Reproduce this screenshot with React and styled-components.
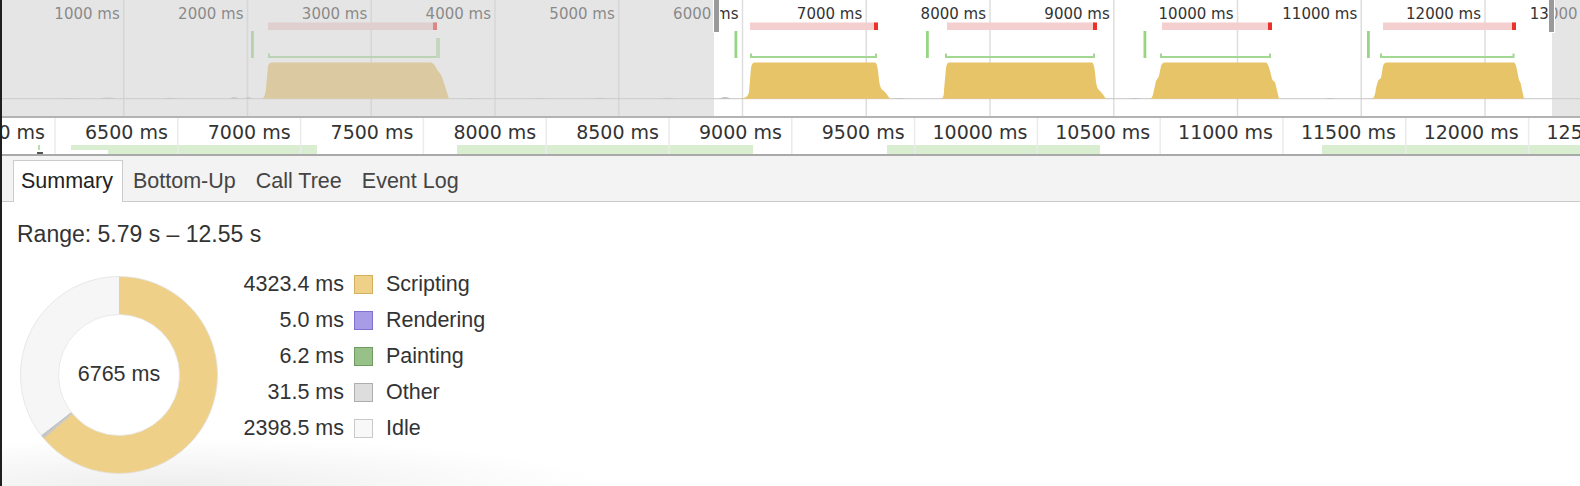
import React from "react";
import styled, { createGlobalStyle } from "styled-components";

const GlobalStyle = createGlobalStyle`
  html, body {
    margin: 0;
    padding: 0;
    background: #ffffff;
  }
  body {
    font-family: "Liberation Sans", Arial, sans-serif;
    color: #333333;
    overflow: hidden;
  }
`;

const CANVAS_FONT = '"DejaVu Sans", Verdana, sans-serif';

// overview: 1000 ms every 123.75px, ruler: 500 ms every 122.8px starting at 6000 ms
const OV_STEP = 123.75;
const RULER_X0 = 55;
const RULER_STEP = 122.8;
const BASE = 98.7;

const frames = [
  {
    bar: [268, 437],
    bracket: [268, 440],
    tall: true,
    mark: 251,
    cpu: "M262,98.7 C264,98 265,96 266,88 L268,66 C269,63 270,62.5 272,62.5 L431,62.5 C434,63 436,68 438,71 C440,73 441,74 443,80 L449,98.7 Z",
  },
  {
    bar: [750, 878],
    bracket: [750, 877],
    mark: 734.5,
    cpu: "M741,98.7 C745,98 748,97 749,92 L751,68 C752,63 753,62.5 755,62.5 L875,62.5 C877,63 878,68 879,80 C880,88 882,90 884,91 C886,93 888,96 890,98.7 Z",
  },
  {
    bar: [947, 1097],
    bracket: [945, 1095],
    mark: 926,
    cpu: "M941,98.7 C943,98 944,96 944,90 L946,68 C947,63 948,62.5 949,62.5 L1092,62.5 C1094,63 1095,70 1096,82 C1097,89 1099,90 1100,91 C1102,93 1104,96 1106,98.7 Z",
  },
  {
    bar: [1162, 1272],
    bracket: [1160, 1271],
    mark: 1143.5,
    cpu: "M1150,98.7 C1152,98 1153,96 1154,90 L1156,81 C1157,79 1158,78 1159,76 L1161,66 C1162,63 1163,62.5 1165,62.5 L1266,62.5 C1268,63 1270,70 1272,79 C1273,81 1274,81 1275,82 L1279,98.7 Z",
  },
  {
    bar: [1383, 1516],
    bracket: [1380, 1514.5],
    mark: 1367,
    cpu: "M1372,98.7 C1374,98 1375,96 1376,88 L1378,81 C1379,79 1380,79 1381,78 L1383,66 C1384,63 1385,62.5 1387,62.5 L1514,62.5 C1516,63 1517,70 1519,80 C1520,82 1521,83 1521,85 L1524,98.7 Z",
  },
];

const bumps = [
  [70, 14, 0.8], [108, 18, 1.2], [170, 14, 1], [234, 10, 1.6], [248, 8, 1.6],
  [470, 10, 0.8], [540, 14, 0.8], [600, 18, 1], [668, 16, 1], [725, 12, 1.8],
  [900, 14, 0.8], [1135, 12, 0.8], [1330, 10, 0.8], [1500, 10, 0.8],
];

const ruleGreens = [
  [71, 317],
  [457, 753],
  [887, 1100],
  [1322, 1580],
];

const categories = [
  { value: 4323.4, label: "Scripting", fill: "#efd089", border: "#d2b05f", slice: "#efd089" },
  { value: 5.0, label: "Rendering", fill: "#a99ce6", border: "#8070cf", slice: "#a99ce6" },
  { value: 6.2, label: "Painting", fill: "#98c189", border: "#6e9b5f", slice: "#8fbf80" },
  { value: 31.5, label: "Other", fill: "#dddddd", border: "#aeaeae", slice: "#c4c4c4" },
  { value: 2398.5, label: "Idle", fill: "#f8f8f8", border: "#c9c9c9", slice: "#f6f6f6" },
];

const Frame = styled.div`
  display: flex;
  width: 1580px;
  height: 486px;
  box-sizing: border-box;
  border-left: 2px solid #1f1f1f;
  overflow: hidden;
`;

const Main = styled.div`
  flex: 1;
  min-width: 0;
  display: flex;
  flex-direction: column;
`;

const Overview = styled.div`
  position: relative;
  height: 116px;
  flex-shrink: 0;
  background: #ffffff;
  border-bottom: 2px solid #b3b3b3;
  overflow: hidden;

  svg {
    display: block;
  }
`;

const Dim = styled.div`
  position: absolute;
  top: 0;
  bottom: 0;
  left: ${(p) => p.$from}px;
  width: ${(p) => p.$to - p.$from}px;
  background: rgba(208, 208, 208, 0.55);
`;

const Handle = styled.div`
  position: absolute;
  top: 0;
  left: ${(p) => p.$at}px;
  width: 5px;
  height: 32px;
  background: #9a9a9a;
  border: 1px solid #ffffff;
  border-top: none;
`;

const Ruler = styled.div`
  height: 36px;
  flex-shrink: 0;
  background: #ffffff;
  border-bottom: 2px solid #a9a9a9;
  overflow: hidden;

  svg {
    display: block;
  }
`;

const TabBar = styled.div`
  display: flex;
  align-items: flex-end;
  height: 45px;
  flex-shrink: 0;
  padding-left: 11px;
  background: #f3f3f3;
  border-bottom: 1px solid #cbcbcb;
`;

const Tab = styled.div`
  display: flex;
  align-items: center;
  height: 41px;
  margin-bottom: -1px;
  padding: 0 9px 0 ${(p) => (p.$active ? 7 : 9)}px;
  font-size: 21.5px;
  color: ${(p) => (p.$active ? "#222222" : "#454545")};
  background: ${(p) => (p.$active ? "#ffffff" : "transparent")};
  border: 1px solid ${(p) => (p.$active ? "#cbcbcb" : "transparent")};
  border-bottom: none;
  white-space: nowrap;
`;

const SummaryPane = styled.div`
  flex: 1;
  padding: 19px 0 0 15px;
  background:
    radial-gradient(ellipse 430px 48px at 170px 100%, #eeeeee 0%, rgba(255, 255, 255, 0) 100%),
    #ffffff;
`;

const RangeLine = styled.div`
  font-size: 23px;
  line-height: 26px;
  color: #333333;
`;

const PieRow = styled.div`
  display: flex;
  align-items: flex-start;
  margin-top: 19px;
`;

const DonutBox = styled.div`
  display: grid;
  place-items: center;
  width: 200px;
  height: 200px;
  margin: 8.5px 0 0 2px;

  > * {
    grid-area: 1 / 1;
  }
`;

const DonutTotal = styled.div`
  font-size: 21.5px;
  color: #333333;
`;

const Legend = styled.div`
  display: grid;
  grid-template-columns: 120px 29px auto;
  grid-auto-rows: 36px;
  align-items: center;
  margin-left: 5px;
  font-size: 21.5px;
  line-height: 36px;
  color: #333333;
`;

const Value = styled.div`
  text-align: right;
  white-space: nowrap;
`;

const Swatch = styled.div`
  width: 17px;
  height: 17px;
  margin-left: 10px;
  background: ${(p) => p.$fill};
  border: 1px solid ${(p) => p.$border};
`;

const Label = styled.div`
  margin-left: 13px;
  white-space: nowrap;
`;

const OverviewChart = () => (
  <svg width="1578" height="116" viewBox="2 0 1578 116">
    {Array.from({ length: 13 }, (_, i) => i + 1).map((k) => (
      <g key={k}>
        <line x1={k * OV_STEP} x2={k * OV_STEP} y1="0" y2="116" stroke="#dedede" strokeWidth="1.5" />
        <text
          x={k * OV_STEP - 4}
          y="18.5"
          textAnchor="end"
          fontFamily={CANVAS_FONT}
          fontSize="15"
          fill="#333333"
        >
          {k * 1000} ms
        </text>
      </g>
    ))}
    <line x1="0" x2="1580" y1={BASE} y2={BASE} stroke="#c6c6c6" strokeWidth="1" />
    {bumps.map(([x, w, h], i) => (
      <path
        key={i}
        d={`M${x - w / 2},${BASE} Q${x},${BASE - h * 2} ${x + w / 2},${BASE} Z`}
        fill="#bdbdbd"
      />
    ))}
    {frames.map((f, i) => (
      <g key={i}>
        <rect x={f.bar[0]} y="22.5" width={f.bar[1] - f.bar[0]} height="7.5" fill="#f4cfcf" />
        <rect x={f.bar[1] - 4} y="22.5" width="4" height="7.5" fill="#e8322a" />
        <rect x={f.mark} y="31" width="2.8" height="27" fill="#97d584" />
        <path
          d={`M${f.bracket[0] + 1},53.5 L${f.bracket[0] + 1},57 L${f.bracket[1] - 1},57 L${f.bracket[1] - 1},53.5`}
          fill="none"
          stroke="#a3d894"
          strokeWidth="2"
        />
        {f.tall && (
          <rect x={f.bracket[1] - 4} y="38" width="4" height="20" fill="#b6e0a8" />
        )}
        <path d={f.cpu} fill="#e8c468" />
      </g>
    ))}
  </svg>
);

const RulerChart = () => (
  <svg width="1578" height="36" viewBox="2 118 1578 36">
    {ruleGreens.map(([a, b], i) => (
      <rect key={i} x={a} y="145" width={b - a} height="9" fill="#d9edd1" />
    ))}
    <rect x="71" y="150" width="37" height="4" fill="#ffffff" />
    <rect x="38" y="145" width="2" height="5" fill="#b9dfae" />
    <rect x="37" y="152" width="6" height="2" fill="#555555" />
    {Array.from({ length: 14 }, (_, k) => k).map((k) => {
      const x = RULER_X0 + k * RULER_STEP;
      return (
        <g key={k}>
          <line x1={x} x2={x} y1="118" y2="154" stroke="#ebebeb" strokeWidth="1.5" />
          <text
            x={x - 10}
            y="139"
            textAnchor="end"
            fontFamily={CANVAS_FONT}
            fontSize="19"
            fill="#333333"
          >
            {6000 + k * 500} ms
          </text>
        </g>
      );
    })}
  </svg>
);

const R_OUT = 98.5;
const R_IN = 60.5;

const polar = (r, deg) => {
  const rad = ((deg - 90) * Math.PI) / 180;
  return [100 + r * Math.cos(rad), 100 + r * Math.sin(rad)];
};

const sector = (a0, a1) => {
  const large = a1 - a0 > 180 ? 1 : 0;
  const [x0, y0] = polar(R_OUT, a0);
  const [x1, y1] = polar(R_OUT, a1);
  const [x2, y2] = polar(R_IN, a1);
  const [x3, y3] = polar(R_IN, a0);
  return `M${x0},${y0} A${R_OUT},${R_OUT} 0 ${large} 1 ${x1},${y1} L${x2},${y2} A${R_IN},${R_IN} 0 ${large} 0 ${x3},${y3} Z`;
};

const Donut = ({ items }) => {
  const total = items.reduce((s, c) => s + c.value, 0);
  let angle = 0;
  return (
    <DonutBox>
      <svg width="200" height="200" viewBox="0 0 200 200">
        {items.map((c) => {
          const start = angle;
          angle += (c.value / total) * 360;
          return <path key={c.label} d={sector(start, Math.min(angle, 359.99))} fill={c.slice} />;
        })}
        <circle cx="100" cy="100" r={R_OUT} fill="none" stroke="#e2e2e2" strokeWidth="0.8" />
        <circle cx="100" cy="100" r={R_IN} fill="none" stroke="#e4e4e4" strokeWidth="0.8" />
      </svg>
      <DonutTotal>{Math.round(total)} ms</DonutTotal>
    </DonutBox>
  );
};

const tabs = ["Summary", "Bottom-Up", "Call Tree", "Event Log"];

export default function App() {
  return (
    <>
      <GlobalStyle />
      <Frame>
        <Main>
          <Overview>
            <OverviewChart />
            <Dim $from={0} $to={712} />
            <Dim $from={1550} $to={1578} />
            <Handle $at={711} />
            <Handle $at={1546} />
          </Overview>
          <Ruler>
            <RulerChart />
          </Ruler>
          <TabBar>
            {tabs.map((t, i) => (
              <Tab key={t} $active={i === 0}>
                {t}
              </Tab>
            ))}
          </TabBar>
          <SummaryPane>
            <RangeLine>Range: 5.79 s – 12.55 s</RangeLine>
            <PieRow>
              <Donut items={categories} />
              <Legend>
                {categories.map((c) => (
                  <React.Fragment key={c.label}>
                    <Value>{c.value.toFixed(1)} ms</Value>
                    <Swatch $fill={c.fill} $border={c.border} />
                    <Label>{c.label}</Label>
                  </React.Fragment>
                ))}
              </Legend>
            </PieRow>
          </SummaryPane>
        </Main>
      </Frame>
    </>
  );
}
